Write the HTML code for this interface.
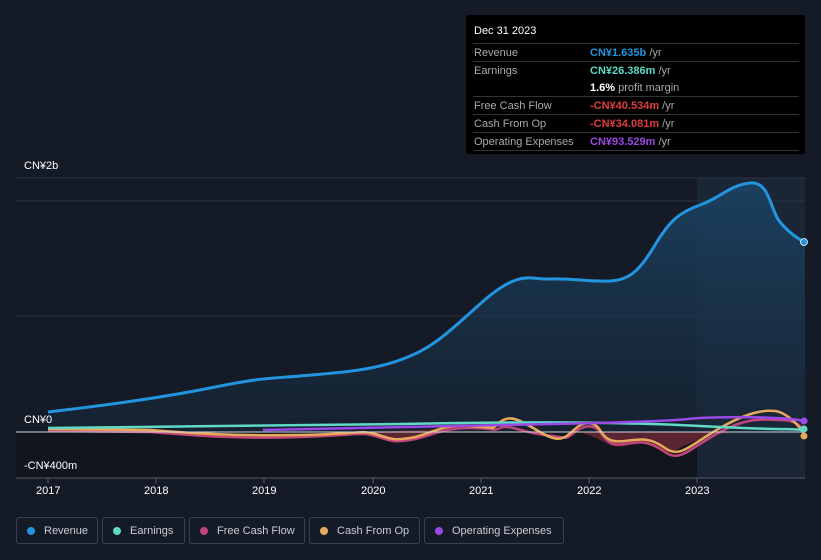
<!DOCTYPE html>
<html><head><meta charset="utf-8"><style>
body{margin:0;width:821px;height:560px;background:#151b26;font-family:"Liberation Sans",sans-serif;overflow:hidden;position:relative}
.t{position:absolute;color:#fff;font-size:11px}
.tip{position:absolute;left:466px;top:15px;width:339px;height:139px;background:#000;border-radius:2px}
.tip table{border-collapse:collapse;position:absolute;left:7px;top:28px;width:326px;font-size:11px}
.tip td{height:17px;border-top:1px solid #333;padding:0 0 0 1px;color:#aaa;white-space:nowrap}
.tip tr:last-child td{border-bottom:1px solid #333}
.tip tr.nb td{border-top:none}
.leg{position:absolute;top:517px;height:27px;border:1px solid #3a4050;border-radius:3px;color:#c8ccd4;font-size:11px;line-height:27px;box-sizing:border-box;padding-left:27px}
.leg i{position:absolute;left:10px;top:9px;width:8px;height:8px;border-radius:50%}
</style></head><body>
<svg width="821" height="560" style="position:absolute;left:0;top:0">
<defs><linearGradient id="g" x1="0" y1="0" x2="0" y2="1"><stop offset="0" stop-color="#1b4262" stop-opacity=".95"/><stop offset="1" stop-color="#17283a" stop-opacity=".5"/></linearGradient></defs>
<rect x="16" y="432" width="789" height="46" fill="#11151e"/>
<rect x="697" y="178" width="108" height="300" fill="#1a2535"/>
<line x1="16" y1="178" x2="805" y2="178" stroke="#2c3442"/>
<line x1="16" y1="201" x2="805" y2="201" stroke="#2c3442"/>
<line x1="16" y1="316" x2="805" y2="316" stroke="#2c3442"/>
<path d="M48,412 C100,406 155,399 210,388 S265,379 300,376 S370,371 400,360 S440,340 480,304 S530,280 550,279 S590,282 610,281 S640,270 655,245 S680,212 700,205 S730,185 750,183 S770,210 780,222 S800,240 805,242 L805,432 L48,432Z" fill="url(#g)"/>
<path d="M48,412 C100,406 155,399 210,388 S265,379 300,376 S370,371 400,360 S440,340 480,304 S530,280 550,279 S590,282 610,281 S640,270 655,245 S680,212 700,205 S730,185 750,183 S770,210 780,222 S800,240 805,242" fill="none" stroke="#2394df" stroke-width="3"/>
<path d="M370,432 C385,440 395,445 420,436 S450,425 470,428 M580,432 C590,435 600,440 610,445 S640,440 650,445 S665,456 680,448 S720,432 740,432" fill="#5a2530" stroke="none"/>
<path d="M48,431 L150,432 C200,436 240,439 300,437 S360,432 375,436 S390,443 410,440 S440,428 470,428 S490,432 500,428 S520,432 545,435 S565,440 575,432 S595,425 600,432 S610,447 625,444 S650,441 665,452 S690,448 720,432 S765,420 780,420 S800,425 805,432" fill="none" stroke="#c0457a" stroke-width="2.5"/>
<path d="M48,429 L150,430 C200,434 240,436 300,435 S360,430 375,434 S390,441 410,438 S440,424 470,426 S490,430 500,422 S520,420 540,432 S565,438 575,429 S595,422 600,430 S610,443 625,441 S650,437 665,448 S690,445 720,428 S765,410 775,411 S800,425 805,436" fill="none" stroke="#e9a95c" stroke-width="2.5"/>
<path d="M48,428 C150,426 300,426 400,424 S600,421 700,426 S780,428 805,430" fill="none" stroke="#5fd9c6" stroke-width="2.5"/>
<path d="M263,430 C400,428 500,426 600,423 S680,419 700,418 S780,416 805,421" fill="none" stroke="#9b49e6" stroke-width="2.5"/>
<line x1="16" y1="432" x2="805" y2="432" stroke="#d0d4da" stroke-width="1"/>
<line x1="16" y1="478" x2="805" y2="478" stroke="#555c68"/>
<circle cx="804" cy="242" r="3.5" fill="#2394df" stroke="#fff" stroke-width=".8"/>
<circle cx="804" cy="421" r="3.5" fill="#9b49e6"/>
<circle cx="804" cy="429" r="3.5" fill="#5fd9c6"/>
<circle cx="804" cy="436" r="3.5" fill="#e9a95c"/>
<g stroke="#555c68"><line x1="48" y1="478" x2="48" y2="483"/><line x1="156" y1="478" x2="156" y2="483"/><line x1="264" y1="478" x2="264" y2="483"/><line x1="373" y1="478" x2="373" y2="483"/><line x1="481" y1="478" x2="481" y2="483"/><line x1="589" y1="478" x2="589" y2="483"/><line x1="697" y1="478" x2="697" y2="483"/></g>
</svg>
<div class="t" style="left:24px;top:160px">CN¥2b</div>
<div class="t" style="left:24px;top:414px">CN¥0</div>
<div class="t" style="left:24px;top:460px">-CN¥400m</div>
<div class="t" style="left:36px;top:485px">2017</div>
<div class="t" style="left:144px;top:485px">2018</div>
<div class="t" style="left:252px;top:485px">2019</div>
<div class="t" style="left:361px;top:485px">2020</div>
<div class="t" style="left:469px;top:485px">2021</div>
<div class="t" style="left:577px;top:485px">2022</div>
<div class="t" style="left:685px;top:485px">2023</div>
<div class="tip"><div style="position:absolute;left:8px;top:10px;color:#fff;font-size:11px">Dec 31 2023</div>
<table>
<tr><td style="width:115px">Revenue</td><td><b style="color:#2394df">CN¥1.635b</b> /yr</td></tr>
<tr><td>Earnings</td><td><b style="color:#5fd9c6">CN¥26.386m</b> /yr</td></tr>
<tr class="nb"><td></td><td><b style="color:#fff">1.6%</b> profit margin</td></tr>
<tr><td>Free Cash Flow</td><td><b style="color:#e03c3c">-CN¥40.534m</b> /yr</td></tr>
<tr><td>Cash From Op</td><td><b style="color:#e03c3c">-CN¥34.081m</b> /yr</td></tr>
<tr><td>Operating Expenses</td><td><b style="color:#9b49e6">CN¥93.529m</b> /yr</td></tr>
</table></div>
<div class="leg" style="left:16px;width:82px"><i style="background:#2394df"></i>Revenue</div>
<div class="leg" style="left:102px;width:83px"><i style="background:#5fd9c6"></i>Earnings</div>
<div class="leg" style="left:189px;width:116px"><i style="background:#c0457a"></i>Free Cash Flow</div>
<div class="leg" style="left:309px;width:111px"><i style="background:#e9a95c"></i>Cash From Op</div>
<div class="leg" style="left:424px;width:140px"><i style="background:#9b49e6"></i>Operating Expenses</div>
</body></html>
